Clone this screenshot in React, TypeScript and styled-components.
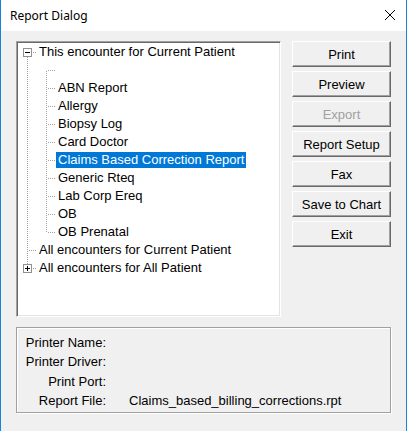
import styled, { createGlobalStyle } from "styled-components";

const GlobalStyle = createGlobalStyle`
  html, body {
    margin: 0;
    padding: 0;
    background: #f0f0f0;
  }
  * {
    box-sizing: border-box;
  }
`;

type VLine = "full" | "top" | "bottom" | "none";
type Toggle = "plus" | "minus" | undefined;

interface Seg {
  v: VLine;
  h?: boolean;
  toggle?: Toggle;
}

interface Node {
  label: string;
  segs: Seg[];
  selected?: boolean;
}

const nodes: Node[] = [
  { label: "This encounter for Current Patient", segs: [{ v: "bottom", h: true, toggle: "minus" }] },
  { label: "", segs: [{ v: "full" }, { v: "bottom", h: true }] },
  { label: "ABN Report", segs: [{ v: "full" }, { v: "full", h: true }] },
  { label: "Allergy", segs: [{ v: "full" }, { v: "full", h: true }] },
  { label: "Biopsy Log", segs: [{ v: "full" }, { v: "full", h: true }] },
  { label: "Card Doctor", segs: [{ v: "full" }, { v: "full", h: true }] },
  { label: "Claims Based Correction Report", segs: [{ v: "full" }, { v: "full", h: true }], selected: true },
  { label: "Generic Rteq", segs: [{ v: "full" }, { v: "full", h: true }] },
  { label: "Lab Corp Ereq", segs: [{ v: "full" }, { v: "full", h: true }] },
  { label: "OB", segs: [{ v: "full" }, { v: "full", h: true }] },
  { label: "OB Prenatal", segs: [{ v: "full" }, { v: "top", h: true }] },
  { label: "All encounters for Current Patient", segs: [{ v: "full", h: true }] },
  { label: "All encounters for All Patient", segs: [{ v: "top", h: true, toggle: "plus" }] },
];

const buttons = [
  { label: "Print" },
  { label: "Preview" },
  { label: "Export", disabled: true },
  { label: "Report Setup" },
  { label: "Fax" },
  { label: "Save to Chart" },
  { label: "Exit" },
];

const info = [
  { label: "Printer Name:", value: "" },
  { label: "Printer Driver:", value: "" },
  { label: "Print Port:", value: "" },
  { label: "Report File:", value: "Claims_based_billing_corrections.rpt" },
];

// dotted tree connector for one indent level (19 x 18)
function Connector({ v, h, toggle }: Seg) {
  const dots: JSX.Element[] = [];
  let from = 0;
  let to = -1;
  if (v === "full") { from = 0; to = 17; }
  if (v === "top") { from = 0; to = 9; }
  if (v === "bottom") { from = toggle ? 14 : 10; to = 17; }
  for (let y = from; y <= to; y += 2) {
    if (toggle && y >= 5 && y <= 13) continue;
    dots.push(<rect key={"v" + y} x={9} y={y} width={1} height={1} fill="#a0a0a0" />);
  }
  if (h) {
    for (let x = toggle ? 15 : 11; x <= 18; x += 2) {
      dots.push(<rect key={"h" + x} x={x} y={9} width={1} height={1} fill="#a0a0a0" />);
    }
  }
  return (
    <svg width="19" height="18" viewBox="0 0 19 18" shapeRendering="crispEdges">
      {dots}
      {toggle && (
        <g>
          <rect x={5.5} y={5.5} width={8} height={8} fill="#fff" stroke="#919191" />
          <rect x={7} y={9} width={5} height={1} fill="#000" />
          {toggle === "plus" && <rect x={9} y={7} width={1} height={5} fill="#000" />}
        </g>
      )}
    </svg>
  );
}

export default function App() {
  return (
    <>
      <GlobalStyle />
      <Window>
        <TitleBar>
          <Title>Report Dialog</Title>
          <CloseIcon width="12" height="12" viewBox="0 0 12 12">
            <path d="M1 1 L11 11 M11 1 L1 11" stroke="#000" strokeWidth="1" />
          </CloseIcon>
        </TitleBar>
        <Body>
          <Top>
            <Tree>
              {nodes.map((n, i) => (
                <TreeRow key={i}>
                  {n.segs.map((s, j) => (
                    <Connector key={j} {...s} />
                  ))}
                  {n.label && <Label $selected={n.selected}>{n.label}</Label>}
                </TreeRow>
              ))}
            </Tree>
            <ButtonColumn>
              {buttons.map((b) => (
                <Button key={b.label} disabled={b.disabled}>
                  {b.label}
                </Button>
              ))}
            </ButtonColumn>
          </Top>
          <InfoGroup>
            {info.map((r) => (
              <InfoRow key={r.label}>
                <InfoLabel>{r.label}</InfoLabel>
                <InfoValue>{r.value}</InfoValue>
              </InfoRow>
            ))}
          </InfoGroup>
        </Body>
      </Window>
    </>
  );
}

const Window = styled.div`
  width: 407px;
  height: 431px;
  background: #f0f0f0;
  border-left: 1px solid #1883d7;
  border-right: 1px solid #1883d7;
  display: flex;
  flex-direction: column;
  font-family: "Liberation Sans", Arial, sans-serif;
  font-size: 13px;
  color: #000;
  overflow: hidden;
`;

const TitleBar = styled.div`
  height: 31px;
  background: #fff;
  display: flex;
  align-items: center;
  justify-content: space-between;
  padding: 0 10px 0 9px;
  flex-shrink: 0;
`;

const Title = styled.div`
  font-family: "Noto Sans", "Open Sans", sans-serif;
  font-size: 12px;
  color: #000;
  margin-top: -1px;
`;

const CloseIcon = styled.svg`
  margin-top: -1px;
`;

const Body = styled.div`
  padding: 10px 14px 0 15px;
  display: flex;
  flex-direction: column;
`;

const Top = styled.div`
  display: flex;
  gap: 11px;
  align-items: flex-start;
`;

const Tree = styled.div`
  width: 265px;
  height: 276px;
  background: #fff;
  border-top: 1px solid #a0a0a0;
  border-left: 1px solid #a0a0a0;
  border-right: 1px solid #fff;
  border-bottom: 1px solid #fff;
  box-shadow: inset 1px 1px 0 #696969, inset -1px -1px 0 #e3e3e3;
  padding: 1px 0 0 1px;
  display: flex;
  flex-direction: column;
`;

const TreeRow = styled.div`
  height: 18px;
  display: flex;
  align-items: center;
  white-space: nowrap;
`;

const Label = styled.span<{ $selected?: boolean }>`
  height: 16px;
  line-height: 16px;
  padding: 0 2px;
  background: ${(p) => (p.$selected ? "#0078d7" : "transparent")};
  color: ${(p) => (p.$selected ? "#fff" : "#000")};
`;

const ButtonColumn = styled.div`
  width: 99px;
  display: flex;
  flex-direction: column;
  gap: 4px;
`;

const Button = styled.button`
  height: 26px;
  width: 100%;
  background: #f0f0f0;
  border-top: 1px solid #fff;
  border-left: 1px solid #fff;
  border-right: 1px solid #696969;
  border-bottom: 1px solid #696969;
  box-shadow: inset -1px -1px 0 #a0a0a0;
  font-family: "Liberation Sans", Arial, sans-serif;
  font-size: 13px;
  color: #000;
  padding: 0;
  &:disabled {
    color: #a0a0a0;
  }
`;

const InfoGroup = styled.div`
  margin-top: 10px;
  width: 375px;
  height: 86px;
  border: 1px solid #a0a0a0;
  box-shadow: inset 1px 1px 0 #fff, 1px 1px 0 #fff;
  padding: 5px 0 0 0;
  display: flex;
  flex-direction: column;
`;

const InfoRow = styled.div`
  display: grid;
  grid-template-columns: 89px 1fr;
  column-gap: 23px;
  height: 19.3px;
  align-items: center;
`;

const InfoLabel = styled.span`
  text-align: right;
  color: #000;
`;

const InfoValue = styled.span`
  color: #000;
`;
